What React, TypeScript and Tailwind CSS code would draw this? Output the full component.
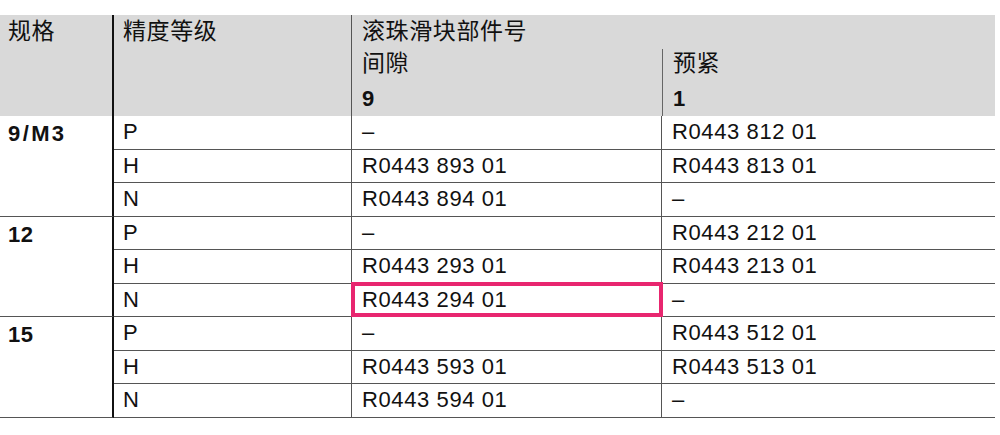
import React from 'react';

interface Row {
  grade: string;
  clearance: string;
  preload: string;
  mark?: boolean;
}

interface Group {
  size: string;
  rows: Row[];
}

const groups: Group[] = [
  {
    size: '9/M3',
    rows: [
      { grade: 'P', clearance: '–', preload: 'R0443 812 01' },
      { grade: 'H', clearance: 'R0443 893 01', preload: 'R0443 813 01' },
      { grade: 'N', clearance: 'R0443 894 01', preload: '–' },
    ],
  },
  {
    size: '12',
    rows: [
      { grade: 'P', clearance: '–', preload: 'R0443 212 01' },
      { grade: 'H', clearance: 'R0443 293 01', preload: 'R0443 213 01' },
      { grade: 'N', clearance: 'R0443 294 01', preload: '–', mark: true },
    ],
  },
  {
    size: '15',
    rows: [
      { grade: 'P', clearance: '–', preload: 'R0443 512 01' },
      { grade: 'H', clearance: 'R0443 593 01', preload: 'R0443 513 01' },
      { grade: 'N', clearance: 'R0443 594 01', preload: '–' },
    ],
  },
];

const font = { fontFamily: '"Liberation Sans", "Noto Sans CJK SC", Arial, sans-serif' };

const App: React.FC = () => {
  return (
    <div className="w-[1000px] h-[435px] bg-white pt-[15px] text-[#111] text-[22px] leading-none tracking-[0.6px]" style={font}>
      <div className="w-[995px] grid grid-cols-[114px_238px_310px_333px] grid-rows-[34px_34px_33px_repeat(9,33.5px)]">
        {/* Header */}
        <div className="row-span-3 bg-[#d9d9d9] border-r-2 border-[#111] pl-2 pt-[5px] text-[23px]">规格</div>
        <div className="row-span-3 bg-[#d9d9d9] border-r border-[#555] pl-[9px] pt-[5px] text-[23px]">精度等级</div>
        <div className="col-span-2 bg-[#d9d9d9] pl-[10px] pt-[5px] text-[23px]">滚珠滑块部件号</div>
        <div className="bg-[#d9d9d9] pl-[10px] pt-[3px] text-[23px]">间隙</div>
        <div className="bg-[#d9d9d9] pl-[10px] pt-[3px] text-[23px] border-l border-[#666]">预紧</div>
        <div className="bg-[#d9d9d9] pl-[10px] pt-[5px] font-bold">9</div>
        <div className="bg-[#d9d9d9] pl-[10px] pt-[5px] font-bold border-l border-[#666]">1</div>

        {/* Body */}
        {groups.map((g) => (
          <React.Fragment key={g.size}>
            <div className={`row-span-3 border-r-2 border-b border-r-[#111] border-b-[#555] pl-2 pt-[7px] font-bold ${g.size === '9/M3' ? 'tracking-[2.4px]' : ''}`}>{g.size}</div>
            {g.rows.map((r) => (
              <React.Fragment key={r.grade}>
                <div className="border-r border-b border-[#555] pl-[9px] flex items-center">{r.grade}</div>
                <div className="relative border-r border-b border-[#555] pl-[10px] flex items-center">
                  {r.clearance}
                  {r.mark && (
                    <span className="absolute -top-[2px] -bottom-px -left-px -right-[2px] border-[4px] border-[#e8266f]" />
                  )}
                </div>
                <div className="border-b border-[#555] pl-[10px] flex items-center">{r.preload}</div>
              </React.Fragment>
            ))}
          </React.Fragment>
        ))}
      </div>
    </div>
  );
};

export default App;
